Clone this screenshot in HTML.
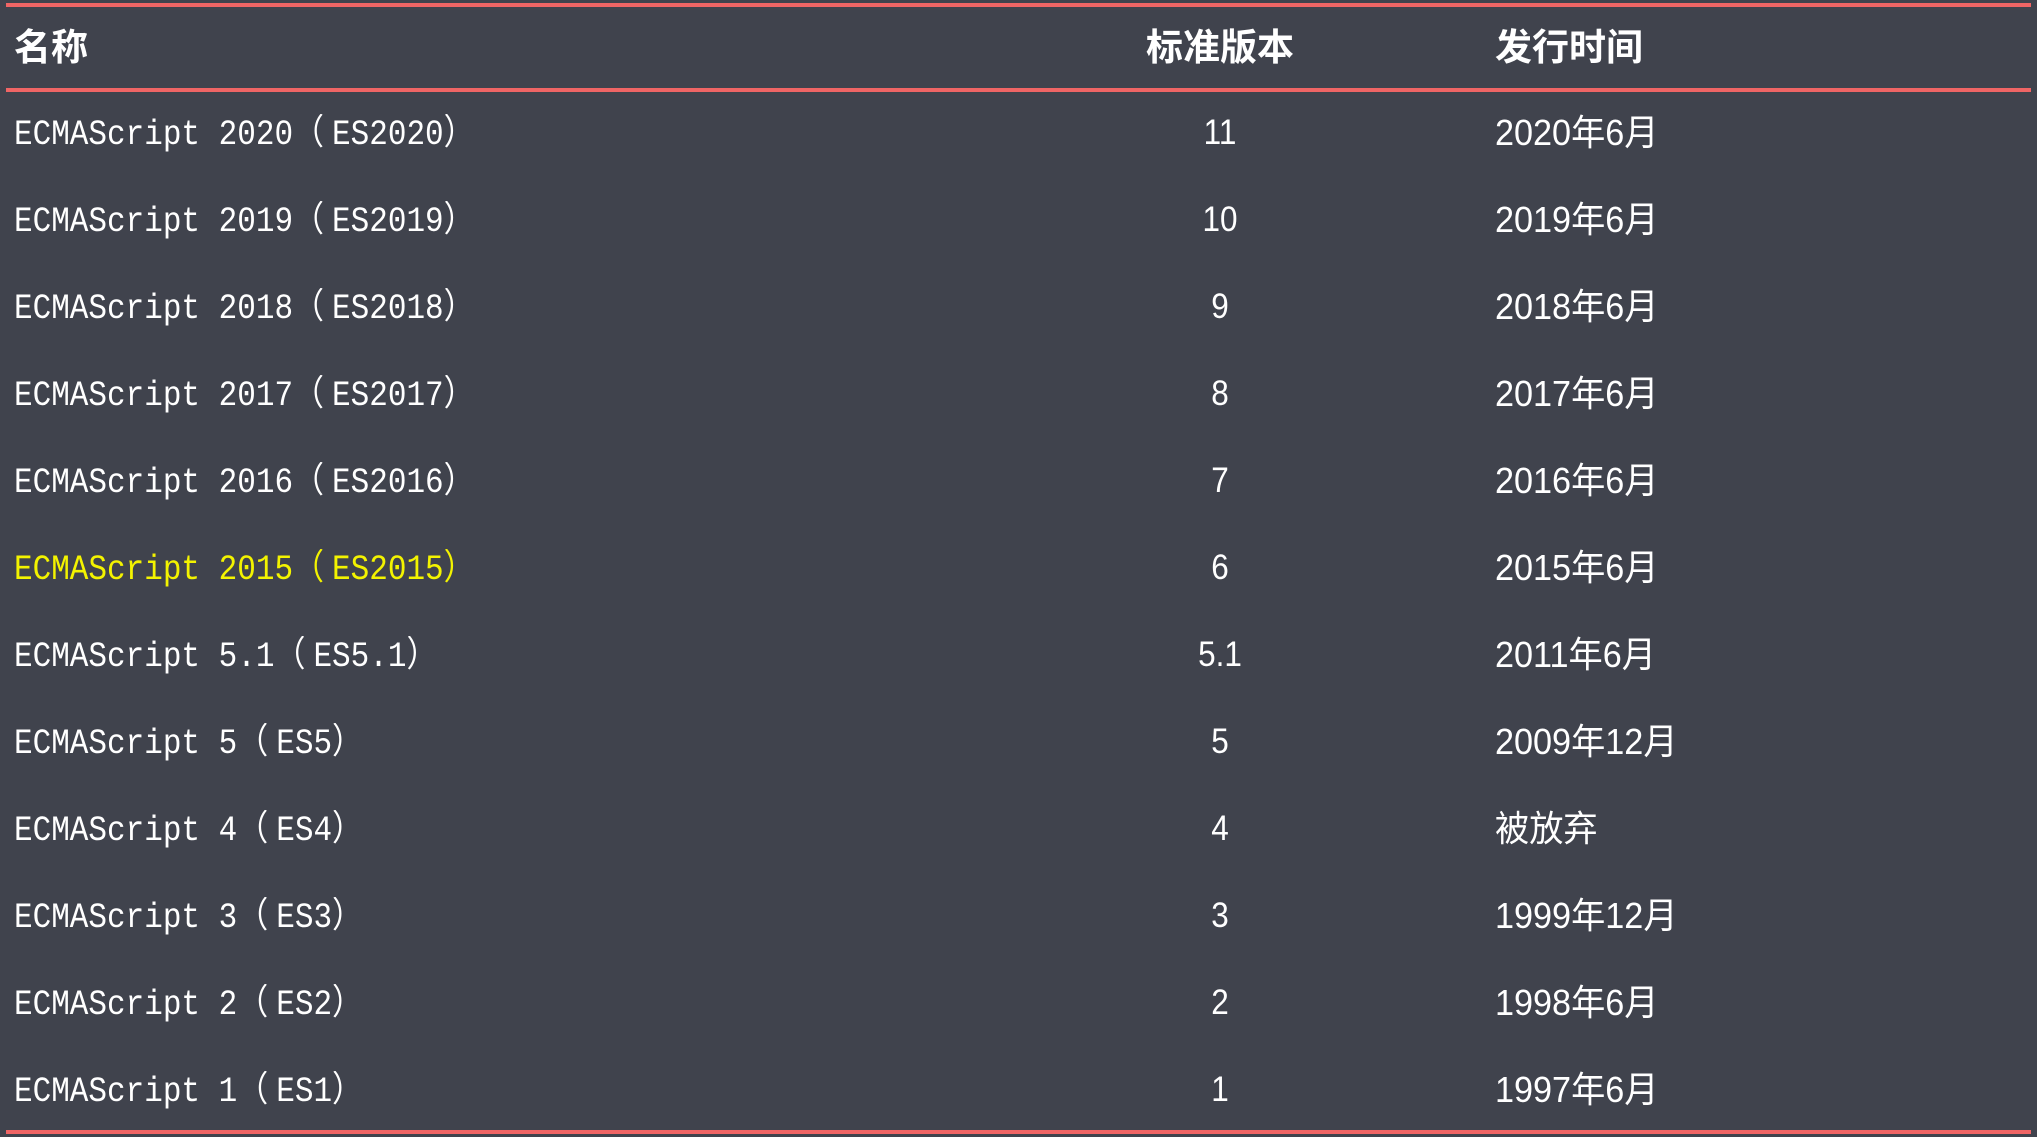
<!DOCTYPE html>
<html><head><meta charset="utf-8"><style>
html,body{margin:0;padding:0;}
body{width:2037px;height:1137px;background:#40434d;position:relative;overflow:hidden;color:#fff;}
.line{position:absolute;left:6px;right:6px;height:4px;background:#f06565;}
.h{position:absolute;top:25px;font:bold 37px "Liberation Sans","Noto Sans CJK SC",sans-serif;line-height:46px;}
.r{position:absolute;height:46px;line-height:46px;white-space:nowrap;}
.n{left:14px;font:31px "Liberation Mono","Noto Sans CJK SC",monospace;line-height:46px;transform:scaleY(1.15);transform-origin:left center;}
.n span{letter-spacing:8px;}
.v{left:1105px;width:230px;text-align:center;font:35px "Liberation Sans","Noto Sans CJK SC",sans-serif;line-height:46px;transform:translateY(-3px) scaleX(0.9);}
.d{left:1495px;font:36px "Liberation Sans","Noto Sans CJK SC",sans-serif;line-height:46px;transform:translateY(-3px) scaleX(0.95);transform-origin:left center;}
.y{color:#f3f300;}
</style></head><body>
<div class="line" style="top:3px"></div>
<div class="line" style="top:88px"></div>
<div class="line" style="top:1130px"></div>
<div class="h" style="left:14px">名称</div>
<div class="h" style="left:1146px">标准版本</div>
<div class="h" style="left:1495px">发行时间</div>

<div class="r n" style="top:113px">ECMAScript 2020<span>（</span>ES2020）</div><div class="r v" style="top:113px">11</div><div class="r d" style="top:113px">2020年6月</div>
<div class="r n" style="top:200px">ECMAScript 2019<span>（</span>ES2019）</div><div class="r v" style="top:200px">10</div><div class="r d" style="top:200px">2019年6月</div>
<div class="r n" style="top:287px">ECMAScript 2018<span>（</span>ES2018）</div><div class="r v" style="top:287px">9</div><div class="r d" style="top:287px">2018年6月</div>
<div class="r n" style="top:374px">ECMAScript 2017<span>（</span>ES2017）</div><div class="r v" style="top:374px">8</div><div class="r d" style="top:374px">2017年6月</div>
<div class="r n" style="top:461px">ECMAScript 2016<span>（</span>ES2016）</div><div class="r v" style="top:461px">7</div><div class="r d" style="top:461px">2016年6月</div>
<div class="r n y" style="top:548px">ECMAScript 2015<span>（</span>ES2015）</div><div class="r v" style="top:548px">6</div><div class="r d" style="top:548px">2015年6月</div>
<div class="r n" style="top:635px">ECMAScript 5.1<span>（</span>ES5.1）</div><div class="r v" style="top:635px">5.1</div><div class="r d" style="top:635px">2011年6月</div>
<div class="r n" style="top:722px">ECMAScript 5<span>（</span>ES5）</div><div class="r v" style="top:722px">5</div><div class="r d" style="top:722px">2009年12月</div>
<div class="r n" style="top:809px">ECMAScript 4<span>（</span>ES4）</div><div class="r v" style="top:809px">4</div><div class="r d" style="top:809px">被放弃</div>
<div class="r n" style="top:896px">ECMAScript 3<span>（</span>ES3）</div><div class="r v" style="top:896px">3</div><div class="r d" style="top:896px">1999年12月</div>
<div class="r n" style="top:983px">ECMAScript 2<span>（</span>ES2）</div><div class="r v" style="top:983px">2</div><div class="r d" style="top:983px">1998年6月</div>
<div class="r n" style="top:1070px">ECMAScript 1<span>（</span>ES1）</div><div class="r v" style="top:1070px">1</div><div class="r d" style="top:1070px">1997年6月</div>
</body></html>
